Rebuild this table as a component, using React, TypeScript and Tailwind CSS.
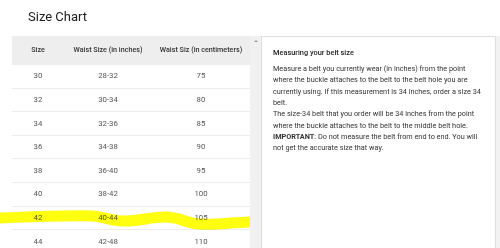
import React from 'react';

const rows = [
    ['30', '28-32', '75'],
    ['32', '30-34', '80'],
    ['34', '32-36', '85'],
    ['36', '34-38', '90'],
    ['38', '36-40', '95'],
    ['40', '38-42', '100'],
    ['42', '40-44', '105'],
    ['44', '42-48', '110'],
];

const lines = [
    'Measure a belt you currently wear (in inches) from the point',
    'where the buckle attaches to the belt to the belt hole you are',
    'currently using. If this measurement is 34 inches, order a size 34',
    'belt.',
    'The size-34 belt that you order will be 34 inches from the point',
    'where the buckle attaches to the belt to the middle belt hole.',
];

export default function App() {
    return (
        <div className="w-[500px] h-[248px] overflow-hidden bg-white relative" style={{ fontFamily: 'Roboto, "Liberation Sans", sans-serif' }}>
            {/* Title */}
            <div className="h-[36px] pt-[7px] pl-[28px] text-[13px] leading-[20px] text-[#212121]">Size Chart</div>

            <div className="flex h-[212px]">
                {/* Table */}
                <div className="w-[238px] ml-[12px]">
                    <div className="flex h-[29px] items-center bg-[#eeeeee] text-[7.2px] font-medium text-[#333]">
                        <div className="w-[52px] text-center">Size</div>
                        <div className="w-[88px] text-center">Waist Size (in inches)</div>
                        <div className="w-[98px] text-center">Waist Siz (in centimeters)</div>
                    </div>
                    {rows.map((r) => (
                        <div key={r[0]} className="flex h-[23.6px] items-center border-b border-[#ececec] text-[7.8px] text-[#555]">
                            <div className="w-[52px] text-center">{r[0]}</div>
                            <div className="w-[88px] text-center">{r[1]}</div>
                            <div className="w-[98px] text-center">{r[2]}</div>
                        </div>
                    ))}
                </div>

                {/* Scrollbar */}
                <div className="w-[11px] bg-[#f1f1f1] flex justify-center pt-[4px]">
                    <div className="w-0 h-0 border-l-[2px] border-r-[2px] border-b-[2px] border-l-transparent border-r-transparent border-b-[#9a9a9a]" />
                </div>

                {/* Info panel */}
                <div className="w-[235px] border border-[#dedede] border-b-0 pt-[10px] pl-[11px] text-[#333]">
                    <div className="text-[7.4px] leading-[12px] font-medium text-[#222] mb-[4px]">Measuring your belt size</div>
                    <div className="text-[7.3px] leading-[11.35px]">
                        {lines.map((l) => (
                            <div key={l} className="whitespace-nowrap">{l}</div>
                        ))}
                        <div className="whitespace-nowrap"><span className="font-bold">IMPORTANT</span>: Do not measure the belt from end to end. You will</div>
                        <div className="whitespace-nowrap">not get the accurate size that way.</div>
                    </div>
                </div>

                <div className="flex-1 bg-[#f2f2f2]" />
            </div>

            {/* Yellow marker highlight */}
            <svg className="absolute left-0 top-0 mix-blend-multiply pointer-events-none" width="250" height="248">
                <path
                    d="M -4 218 C 30 217, 70 215, 92 216 C 105 217, 112 221, 125 221 C 140 221, 150 217, 165 217 C 180 217, 185 223, 200 224 C 215 225, 235 222, 256 222"
                    fill="none"
                    stroke="#ffff10"
                    strokeWidth="11"
                />
            </svg>
        </div>
    );
}
